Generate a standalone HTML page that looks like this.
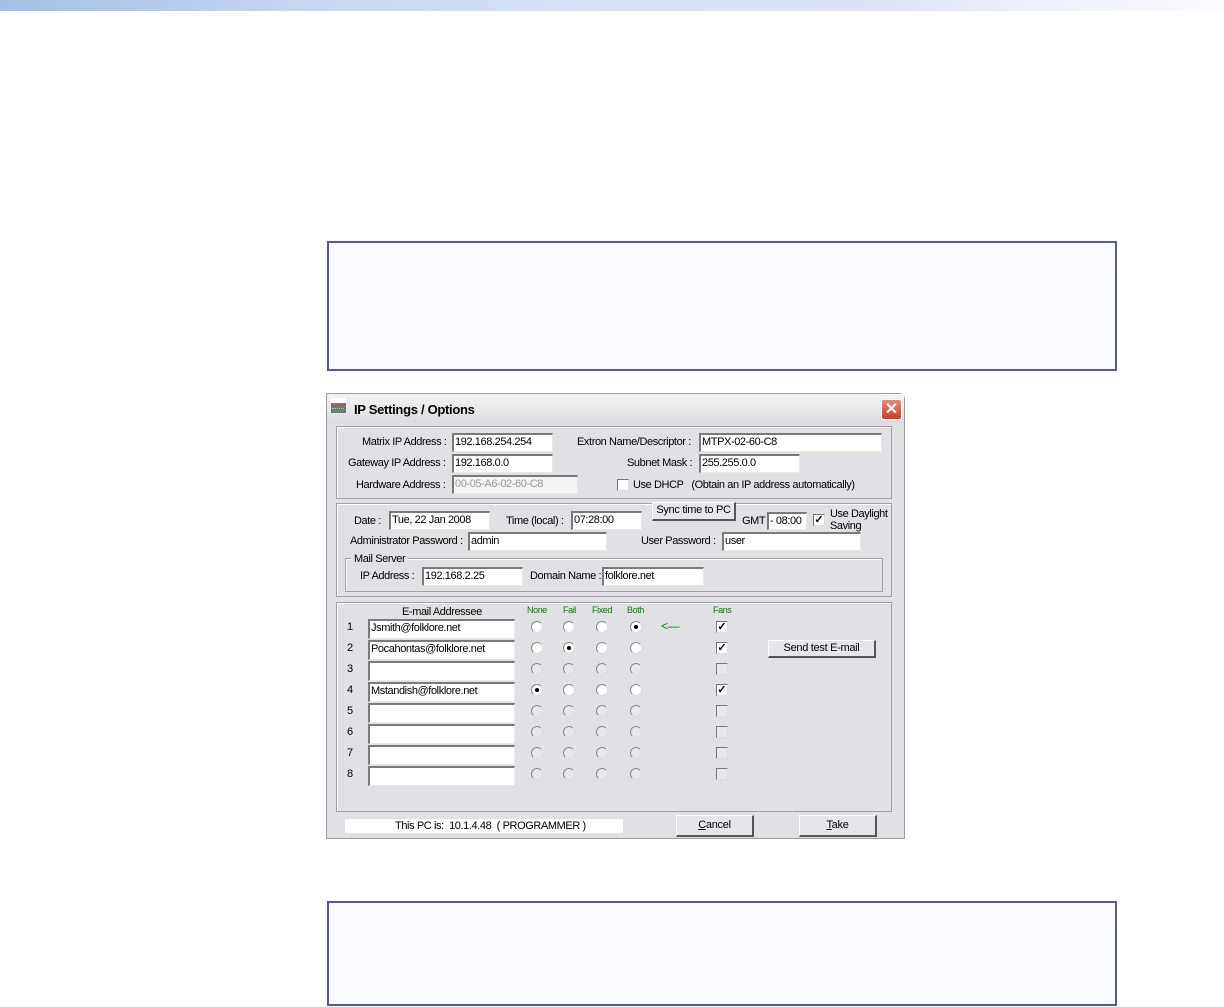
<!DOCTYPE html>
<html><head><meta charset="utf-8"><style>
*{box-sizing:border-box;margin:0;padding:0}
body{width:1224px;height:1007px;background:#fff;position:relative;overflow:hidden;font-family:"Liberation Sans",sans-serif}
.top{position:absolute;left:0;top:0;width:1224px;height:11px;background:linear-gradient(90deg,#a4c0e6 0%,#c8d6f0 25%,#d8e2f4 50%,#dce2f4 70%,#eef0fa 85%,#fafcff 100%)}
.note{position:absolute;left:327px;width:790px;border:2px solid #5656a8;background:#fafbff}
.a{position:absolute}
.win{position:absolute;left:326px;top:393px;width:579px;height:446px;background:#e1e1e5;border:1px solid #9a9aa2;border-radius:0 6px 0 0}
.tb{position:absolute;left:0;top:0;width:577px;height:29px;background:linear-gradient(#f4f4f6,#dcdce0)}
.d{font-size:11px;letter-spacing:-0.4px;color:#000;white-space:nowrap;position:absolute;line-height:13px}
.in{position:absolute;background:#fff;border:1px solid #ebe9dc;border-top:2px solid #7a7a7a;border-left:2px solid #7a7a7a;font-size:11px;letter-spacing:-0.4px;padding-left:1px;line-height:14px;white-space:nowrap}
.grp{position:absolute;border:1px solid #a0a0a8;box-shadow:1px 1px 0 #fff inset}
.btn{position:absolute;background:#e6e6ea;border:1px solid #fff;border-right:2px solid #555;border-bottom:2px solid #555;font-size:11px;letter-spacing:-0.3px;text-align:center;line-height:15px}
.r{position:absolute;width:12px;height:12px;border-radius:50%;background:#fff;border:1px solid #888;border-right-color:#ddd;border-bottom-color:#ddd}
.r.dis{background:#e8e8ea}
.r.on::after{content:"";position:absolute;left:3px;top:3px;width:4px;height:4px;border-radius:50%;background:#000}
.cb{position:absolute;width:12px;height:12px;background:#fff;border:1px solid #777;border-right-color:#ddd;border-bottom-color:#ddd;font-size:11px;line-height:10px;text-align:center;font-weight:bold}
.cb.dis{background:#e8e8ea}
.g{color:#008000;font-size:9px}
</style></head><body>
<div class="top"></div>
<div class="note" style="top:241px;height:130px"></div>
<div class="note" style="top:901px;height:105px"></div>

<div class="win">
<div class="tb"></div>
<div class="a" style="left:4px;top:4px;width:15px;height:15px;background:#777;border-top:5px solid #fff"><div style="position:absolute;left:1px;top:2px;width:12px;height:1px;border-top:1px dotted #f33"></div><div style="position:absolute;left:1px;top:5px;width:12px;height:1px;border-top:1px dotted #5f5"></div></div>
<div class="a" style="left:27px;top:8px;font-size:13px;font-weight:bold;letter-spacing:-0.3px">IP Settings / Options</div>
<div class="a" style="left:554px;top:5px;width:21px;height:21px;border-radius:3px;background:linear-gradient(#e88a70,#c8402a);border:1px solid #fff;color:#fff;font-size:16px;line-height:19px;text-align:center;font-weight:bold">✕</div>
</div>

<!-- group 1 -->
<div class="grp" style="left:336px;top:426px;width:556px;height:73px"></div>
<div class="d" style="left:362px;top:436px">Matrix IP Address :</div>
<div class="in" style="left:452px;top:433px;width:101px;height:19px">192.168.254.254</div>
<div class="d" style="left:577px;top:436px">Extron Name/Descriptor :</div>
<div class="in" style="left:699px;top:433px;width:183px;height:19px">MTPX-02-60-C8</div>
<div class="d" style="left:348px;top:457px">Gateway IP Address :</div>
<div class="in" style="left:452px;top:454px;width:101px;height:19px">192.168.0.0</div>
<div class="d" style="left:627px;top:457px">Subnet Mask :</div>
<div class="in" style="left:699px;top:454px;width:101px;height:19px">255.255.0.0</div>
<div class="d" style="left:356px;top:479px">Hardware Address :</div>
<div class="in" style="left:452px;top:475px;width:126px;height:19px;color:#999;background:#f4f4f4">00-05-A6-02-60-C8</div>
<div class="cb" style="left:617px;top:479px"></div>
<div class="d" style="left:633px;top:479px">Use DHCP &nbsp;&nbsp;(Obtain an IP address automatically)</div>

<!-- group 2 -->
<div class="grp" style="left:336px;top:503px;width:556px;height:94px"></div>
<div class="d" style="left:354px;top:515px">Date :</div>
<div class="in" style="left:389px;top:511px;width:101px;height:19px">Tue, 22 Jan 2008</div>
<div class="d" style="left:506px;top:515px">Time (local) :</div>
<div class="in" style="left:571px;top:511px;width:71px;height:19px">07:28:00</div>
<div class="btn" style="left:652px;top:502px;width:84px;height:19px">Sync time to PC</div>
<div class="d" style="left:742px;top:515px">GMT</div>
<div class="in" style="left:767px;top:512px;width:40px;height:18px">- 08:00</div>
<div class="cb" style="left:813px;top:514px">✓</div>
<div class="d" style="left:830px;top:508px;line-height:12px">Use Daylight<br>Saving</div>
<div class="d" style="left:350px;top:535px">Administrator Password :</div>
<div class="in" style="left:468px;top:532px;width:139px;height:19px">admin</div>
<div class="d" style="left:641px;top:535px">User Password :</div>
<div class="in" style="left:722px;top:532px;width:139px;height:19px">user</div>
<div class="grp" style="left:345px;top:558px;width:538px;height:34px"></div>
<div class="d" style="left:351px;top:553px;background:#e1e1e5;padding:0 3px">Mail Server</div>
<div class="d" style="left:360px;top:570px">IP Address :</div>
<div class="in" style="left:422px;top:567px;width:101px;height:19px">192.168.2.25</div>
<div class="d" style="left:530px;top:570px">Domain Name :</div>
<div class="in" style="left:602px;top:567px;width:102px;height:19px">folklore.net</div>

<!-- group 3 -->
<div class="grp" style="left:336px;top:602px;width:556px;height:210px"></div>
<div class="d" style="left:402px;top:606px">E-mail Addressee</div>
<div class="d g" style="left:527px;top:604px">None</div>
<div class="d g" style="left:563px;top:604px">Fail</div>
<div class="d g" style="left:592px;top:604px">Fixed</div>
<div class="d g" style="left:627px;top:604px">Both</div>
<div class="d g" style="left:713px;top:604px">Fans</div>
<div class="d" style="left:661px;top:620px;color:#008000;font-size:12px">&lt;—</div>

<div class="d" style="left:347px;top:621px">1</div><div class="in" style="left:368px;top:619px;width:147px;height:20px">Jsmith@folklore.net</div>
<div class="r" style="left:531px;top:621px"></div><div class="r" style="left:563px;top:621px"></div><div class="r" style="left:596px;top:621px"></div><div class="r on" style="left:630px;top:621px"></div><div class="cb" style="left:716px;top:621px">✓</div>

<div class="d" style="left:347px;top:642px">2</div><div class="in" style="left:368px;top:640px;width:147px;height:20px">Pocahontas@folklore.net</div>
<div class="r" style="left:531px;top:642px"></div><div class="r on" style="left:563px;top:642px"></div><div class="r" style="left:596px;top:642px"></div><div class="r" style="left:630px;top:642px"></div><div class="cb" style="left:716px;top:642px">✓</div>

<div class="d" style="left:347px;top:663px">3</div><div class="in" style="left:368px;top:661px;width:147px;height:20px"></div>
<div class="r dis" style="left:531px;top:663px"></div><div class="r dis" style="left:563px;top:663px"></div><div class="r dis" style="left:596px;top:663px"></div><div class="r dis" style="left:630px;top:663px"></div><div class="cb dis" style="left:716px;top:663px"></div>

<div class="d" style="left:347px;top:684px">4</div><div class="in" style="left:368px;top:682px;width:147px;height:20px">Mstandish@folklore.net</div>
<div class="r on" style="left:531px;top:684px"></div><div class="r" style="left:563px;top:684px"></div><div class="r" style="left:596px;top:684px"></div><div class="r" style="left:630px;top:684px"></div><div class="cb" style="left:716px;top:684px">✓</div>

<div class="d" style="left:347px;top:705px">5</div><div class="in" style="left:368px;top:703px;width:147px;height:20px"></div>
<div class="r dis" style="left:531px;top:705px"></div><div class="r dis" style="left:563px;top:705px"></div><div class="r dis" style="left:596px;top:705px"></div><div class="r dis" style="left:630px;top:705px"></div><div class="cb dis" style="left:716px;top:705px"></div>

<div class="d" style="left:347px;top:726px">6</div><div class="in" style="left:368px;top:724px;width:147px;height:20px"></div>
<div class="r dis" style="left:531px;top:726px"></div><div class="r dis" style="left:563px;top:726px"></div><div class="r dis" style="left:596px;top:726px"></div><div class="r dis" style="left:630px;top:726px"></div><div class="cb dis" style="left:716px;top:726px"></div>

<div class="d" style="left:347px;top:747px">7</div><div class="in" style="left:368px;top:745px;width:147px;height:20px"></div>
<div class="r dis" style="left:531px;top:747px"></div><div class="r dis" style="left:563px;top:747px"></div><div class="r dis" style="left:596px;top:747px"></div><div class="r dis" style="left:630px;top:747px"></div><div class="cb dis" style="left:716px;top:747px"></div>

<div class="d" style="left:347px;top:768px">8</div><div class="in" style="left:368px;top:766px;width:147px;height:20px"></div>
<div class="r dis" style="left:531px;top:768px"></div><div class="r dis" style="left:563px;top:768px"></div><div class="r dis" style="left:596px;top:768px"></div><div class="r dis" style="left:630px;top:768px"></div><div class="cb dis" style="left:716px;top:768px"></div>

<div class="btn" style="left:768px;top:640px;width:108px;height:18px">Send test E-mail</div>

<div class="a" style="left:345px;top:819px;width:278px;height:14px;background:#fff"></div>
<div class="d" style="left:395px;top:820px">This PC is: &nbsp;10.1.4.48 &nbsp;( PROGRAMMER )</div>
<div class="btn" style="left:676px;top:815px;width:78px;height:22px;line-height:19px"><u>C</u>ancel</div>
<div class="btn" style="left:799px;top:815px;width:78px;height:22px;line-height:19px"><u>T</u>ake</div>
</body></html>
